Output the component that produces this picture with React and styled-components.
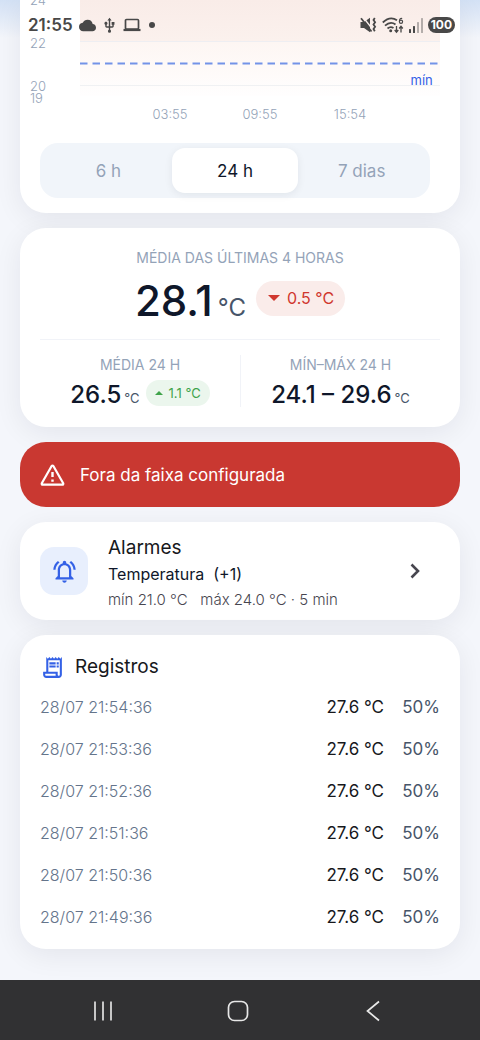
import React, { useState } from 'react';
import styled, { createGlobalStyle } from 'styled-components';
import { MdCloud, MdOutlineNotificationsActive, MdOutlineReceiptLong, MdUsb } from 'react-icons/md';

const ranges = ['6 h', '24 h', '7 dias'];

const yTicks = [
    { label: '24', y: -1 },
    { label: '22', y: 42 },
    { label: '20', y: 85 },
    { label: '19', y: 97 },
];

const xTicks = [
    { label: '03:55', x: '25%' },
    { label: '09:55', x: '50%' },
    { label: '15:54', x: '75%' },
];

const records = [
    { time: '28/07 21:54:36', temp: '27.6 °C', hum: '50%' },
    { time: '28/07 21:53:36', temp: '27.6 °C', hum: '50%' },
    { time: '28/07 21:52:36', temp: '27.6 °C', hum: '50%' },
    { time: '28/07 21:51:36', temp: '27.6 °C', hum: '50%' },
    { time: '28/07 21:50:36', temp: '27.6 °C', hum: '50%' },
    { time: '28/07 21:49:36', temp: '27.6 °C', hum: '50%' },
];

function StatusIcons() {
    return (
        <StatusGroup>
            <svg width='17' height='16' viewBox='0 0 17 16' fill='none' stroke='#484848' strokeWidth='1.6'>
                <path d='M0.5 5h3.5L10 0.8v14.4L4 11H0.5z' fill='#484848' stroke='none' />
                <path d='M3 0l9 11.5' stroke='#fbf0ed' strokeWidth='1.3' />
                <path d='M1 1.2l10.5 13.3' strokeWidth='1.8' />
                <path d='M14.8 1l-1.3 2 1.6 2.2-1.6 2.3 1.6 2.2-1.6 2.3 1.3 2.2' strokeWidth='1.8' />
            </svg>
            <svg width='22' height='17' viewBox='0 0 22 17' fill='none' stroke='#484848' strokeWidth='1.8'>
                <path d='M0.8 5.5Q8 -1.5 15 3.2M3 8.7Q8.5 3.8 13.5 7.5M5.5 11.5Q8.5 9 11.5 11' />
                <circle cx='8.7' cy='13.8' r='1.5' fill='#484848' stroke='none' />
                <path d='M14.5 9v6M12.7 13l1.8 2.2 1.8-2.2M19 15.5V9.5M17.2 11.5L19 9.3l1.8 2.2' strokeWidth='1.3' />
                <path d='M20.2 1.5Q17.5 0.8 17.4 4.5' strokeWidth='1.2' />
                <circle cx='19' cy='4.7' r='1.6' strokeWidth='1.2' />
            </svg>
            <svg width='14' height='15' viewBox='0 0 14 15' fill='#484848'>
                <rect x='0' y='11' width='2' height='4' rx='0.5' />
                <rect x='4' y='8' width='2' height='7' rx='0.5' />
                <rect x='8' y='4' width='2' height='11' rx='0.5' opacity='0.4' />
                <rect x='12' y='0' width='2' height='15' rx='0.5' opacity='0.4' />
            </svg>
            <Battery>100</Battery>
        </StatusGroup>
    );
}

function Chart() {
    return (
        <ChartBox>
            <svg width='50' height='128'>
                {yTicks.map(t => (
                    <AxisText key={t.label} x='0' y={t.y + 6}>{t.label}</AxisText>
                ))}
            </svg>
            <svg width='100%' height='128'>
                <defs>
                    <linearGradient id='band' x1='0' y1='0' x2='0' y2='1'>
                        <stop offset='0' stopColor='#f9ece8' />
                        <stop offset='0.43' stopColor='#fbf1ed' />
                        <stop offset='0.44' stopColor='#fdf6f3' />
                        <stop offset='1' stopColor='#fffefe' />
                    </linearGradient>
                </defs>
                <rect width='100%' height='96' fill='url(#band)' />
                <line x1='0' x2='100%' y1='41.5' y2='41.5' stroke='#eeeef2' />
                <line x1='0' x2='100%' y1='85.5' y2='85.5' stroke='#f0f1f3' />
                <line x1='0' x2='100%' y1='63.5' y2='63.5' stroke='#7393e8' strokeWidth='2' strokeDasharray='7.5 5' />
                <MinText x='98%' y='85' textAnchor='end'>mín</MinText>
                {xTicks.map(t => (
                    <AxisText key={t.label} x={t.x} y='119' textAnchor='middle'>{t.label}</AxisText>
                ))}
            </svg>
        </ChartBox>
    );
}

function App() {
    const [range, setRange] = useState('24 h');

    return (
        <Page>
            <GlobalStyle />
            <StatusBar>
                <StatusGroup>
                    <Clock>21:55</Clock>
                    <MdCloud size={17} />
                    <MdUsb size={17} />
                    <svg width='18' height='14' viewBox='0 0 18 14' fill='none' stroke='#484848' strokeWidth='1.7'>
                        <rect x='2.5' y='1.5' width='13' height='9.5' rx='1' />
                        <path d='M0.5 12h17' strokeWidth='2.2' />
                    </svg>
                    <Dot />
                </StatusGroup>
                <StatusIcons />
            </StatusBar>

            <Main>
                <ChartCard>
                    <Chart />
                    <Segments>
                        {ranges.map(r => (
                            <Segment key={r} type='button' $active={r === range} aria-pressed={r === range} onClick={() => setRange(r)}>
                                {r}
                            </Segment>
                        ))}
                    </Segments>
                </ChartCard>

                <StatsCard>
                    <Label>MÉDIA DAS ÚLTIMAS 4 HORAS</Label>
                    <BigRow>
                        <BigReading>28.1<BigUnit>°C</BigUnit></BigReading>
                        <Chip $tone='down'>
                            <svg width='12' height='6' viewBox='0 0 12 6'><path d='M0 0h12L6 6z' fill='currentColor' /></svg>
                            0.5 °C
                        </Chip>
                    </BigRow>
                    <Columns>
                        <Column>
                            <Label>MÉDIA 24 H</Label>
                            <SmallRow>
                                <Reading>26.5<Unit>°C</Unit></Reading>
                                <Chip $tone='up' $small>
                                    <svg width='8' height='4' viewBox='0 0 8 4'><path d='M0 4h8L4 0z' fill='currentColor' /></svg>
                                    1.1 °C
                                </Chip>
                            </SmallRow>
                        </Column>
                        <Column>
                            <Label>MÍN–MÁX 24 H</Label>
                            <SmallRow>
                                <Reading>24.1 – 29.6<Unit>°C</Unit></Reading>
                            </SmallRow>
                        </Column>
                    </Columns>
                </StatsCard>

                <Alert role='alert'>
                    <svg width='25' height='24' viewBox='0 0 25 24' fill='none' stroke='#fff' strokeWidth='2.2' strokeLinejoin='round'>
                        <path d='M11.5 3.2L1.8 20.2Q1.3 21.6 2.8 21.7H22.2Q23.7 21.6 23.2 20.2L13.5 3.2Q12.5 1.9 11.5 3.2Z' />
                        <path d='M12.5 9v5M12.5 16.5v2.2' strokeWidth='2.4' />
                    </svg>
                    Fora da faixa configurada
                </Alert>

                <AlarmCard type='button'>
                    <IconTile><MdOutlineNotificationsActive size={27} /></IconTile>
                    <AlarmText>
                        <Title>Alarmes</Title>
                        <AlarmName>Temperatura&nbsp; (+1)</AlarmName>
                        <AlarmRange>mín 21.0 °C &nbsp; máx 24.0 °C · 5 min</AlarmRange>
                    </AlarmText>
                    <svg width='10' height='16' viewBox='0 0 10 16' fill='none' stroke='#47464f' strokeWidth='2.6'>
                        <path d='M1.5 1.5L8 8l-6.5 6.5' />
                    </svg>
                </AlarmCard>

                <RecordsCard>
                    <RecordsHead>
                        <MdOutlineReceiptLong size={25} color='#3461e6' />
                        <Title as='h2'>Registros</Title>
                    </RecordsHead>
                    <Table>
                        <tbody>
                            {records.map(r => (
                                <tr key={r.time}>
                                    <Time>{r.time}</Time>
                                    <Temp>{r.temp}</Temp>
                                    <Hum>{r.hum}</Hum>
                                </tr>
                            ))}
                        </tbody>
                    </Table>
                </RecordsCard>
            </Main>

            <NavBar>
                <NavButton type='button' aria-label='Recentes'>
                    <svg width='20' height='20' viewBox='0 0 20 20' stroke='#d8d8d8' strokeWidth='1.8'>
                        <path d='M2 0.5v19M10 0.5v19M18 0.5v19' />
                    </svg>
                </NavButton>
                <NavButton type='button' aria-label='Início'>
                    <svg width='22' height='22' viewBox='0 0 22 22' fill='none' stroke='#e8e8e8' strokeWidth='1.7'>
                        <rect x='1.5' y='1.5' width='19' height='19' rx='6' />
                    </svg>
                </NavButton>
                <NavButton type='button' aria-label='Voltar'>
                    <svg width='14' height='22' viewBox='0 0 14 22' fill='none' stroke='#e8e8e8' strokeWidth='1.7'>
                        <path d='M13 1.5L1.5 11 13 20.5' />
                    </svg>
                </NavButton>
            </NavBar>
        </Page>
    );
}

const GlobalStyle = createGlobalStyle`
    * {
        box-sizing: border-box;
    }
    body {
        margin: 0;
        font-family: Inter, 'Liberation Sans', sans-serif;
        color: #17181c;
    }
    button {
        font: inherit;
        color: inherit;
        border: none;
        cursor: pointer;
    }
    h2, p {
        margin: 0;
    }
    svg {
        display: block;
        flex-shrink: 0;
    }
`;

const Page = styled.div`
    position: relative;
    min-height: 100vh;
    display: flex;
    flex-direction: column;
    background: linear-gradient(#d3e1f5 0, #f4f6fb 38px);
`;

const StatusBar = styled.header`
    position: absolute;
    top: 0;
    left: 0;
    right: 0;
    z-index: 1;
    height: 50px;
    padding: 0 25px 0 28px;
    display: flex;
    align-items: center;
    justify-content: space-between;
    color: #484848;
`;

const StatusGroup = styled.div`
    display: flex;
    align-items: center;
    gap: 5px;
`;

const Clock = styled.span`
    font-size: 17px;
    font-weight: 600;
    margin-right: 1px;
`;

const Dot = styled.span`
    width: 6px;
    height: 6px;
    margin-left: 3px;
    border-radius: 50%;
    background: #484848;
`;

const Battery = styled.span`
    height: 16px;
    padding: 0 3px;
    border-radius: 8px;
    background: #484848;
    color: #fff;
    font-size: 12px;
    line-height: 16px;
    font-weight: 700;
`;

const Main = styled.main`
    flex: 1;
    display: flex;
    flex-direction: column;
    gap: 15px;
    padding: 0 20px 31px;
`;

const Card = styled.section`
    padding: 20px;
    border-radius: 26px;
    background: #fff;
    box-shadow: 0 6px 28px rgba(20, 20, 40, 0.07);
`;

const ChartCard = styled(Card)`
    padding: 0 30px 15px 20px;
    border-radius: 0 0 26px 26px;
`;

const ChartBox = styled.div`
    display: grid;
    grid-template-columns: 50px 1fr;
    margin: 0 -10px 15px;
`;

const AxisText = styled.text`
    font-size: 13px;
    font-weight: 300;
    fill: #94a3b8;
`;

const MinText = styled.text`
    font-size: 13px;
    fill: #3461e6;
`;

const Segments = styled.div`
    display: grid;
    grid-template-columns: repeat(3, 1fr);
    padding: 5px;
    border-radius: 18px;
    background: #f1f5fa;
`;

const Segment = styled.button`
    height: 45px;
    padding: 0;
    border-radius: 13px;
    font-size: 17px;
    font-weight: 400;
    color: ${props => props.$active ? '#0f172a' : '#94a3b8'};
    background: ${props => props.$active ? '#fff' : 'transparent'};
    box-shadow: ${props => props.$active ? '0 2px 8px rgba(15, 23, 42, 0.07)' : 'none'};
`;

const StatsCard = styled(Card)`
    text-align: center;
`;

const Label = styled.p`
    font-size: 14px;
    line-height: 20px;
    color: #94a3b8;
`;

const BigRow = styled.div`
    height: 48px;
    margin: 6px 0 17px;
    display: flex;
    justify-content: center;
    align-items: center;
    gap: 10px;
`;

const SmallRow = styled.div`
    height: 28px;
    margin-top: 4px;
    display: flex;
    justify-content: center;
    align-items: center;
    gap: 6px;
`;

const BigReading = styled.div`
    display: flex;
    align-items: baseline;
    gap: 5px;
    padding-top: 6px;
    font-size: 42px;
    line-height: 48px;
    font-weight: 500;
    color: #0f172a;
    white-space: nowrap;
`;

const Reading = styled(BigReading)`
    gap: 3px;
    padding-top: 4px;
    font-size: 24px;
    line-height: 28px;
`;

const BigUnit = styled.span`
    font-size: 24px;
    line-height: 24px;
    font-weight: 400;
    color: #475569;
`;

const Unit = styled(BigUnit)`
    font-size: 13px;
    line-height: 14px;
`;

const Chip = styled.span`
    display: flex;
    align-items: center;
    gap: ${props => props.$small ? '6px' : '7px'};
    height: ${props => props.$small ? '26px' : '35px'};
    padding: ${props => props.$small ? '0 9px' : '0 11px 0 12px'};
    border-radius: 18px;
    font-size: ${props => props.$small ? '13px' : '16px'};
    white-space: nowrap;
    color: ${props => props.$tone === 'up' ? '#3fa34a' : '#d0382f'};
    background: ${props => props.$tone === 'up' ? '#ebf6ed' : '#faecea'};
`;

const Columns = styled.div`
    display: grid;
    grid-template-columns: 1fr 1fr;
    padding-top: 15px;
    border-top: 1px solid #f1f3f8;
`;

const Column = styled.div`
    & + & {
        border-left: 1px solid #f1f3f8;
    }
`;

const Alert = styled.div`
    display: flex;
    align-items: center;
    gap: 15px;
    min-height: 65px;
    padding: 0 20px;
    border-radius: 26px;
    background: #c93831;
    color: #fff;
    font-size: 17px;
`;

const AlarmCard = styled(Card).attrs({ as: 'button' })`
    display: flex;
    align-items: center;
    gap: 20px;
    padding: 7px 40px 7px 20px;
    text-align: left;
`;

const IconTile = styled.span`
    width: 48px;
    height: 48px;
    border-radius: 14px;
    display: flex;
    align-items: center;
    justify-content: center;
    background: #e8effd;
    color: #3461e6;
`;

const AlarmText = styled.span`
    flex: 1;
    display: flex;
    flex-direction: column;
    padding-top: 6px;
    line-height: 26px;
`;

const Title = styled.span`
    font-size: 19px;
    line-height: 26px;
    font-weight: 400;
    color: #17181c;
`;

const AlarmName = styled.span`
    font-size: 16px;
    color: #0f172a;
`;

const AlarmRange = styled.span`
    font-size: 15px;
    font-weight: 300;
    color: #47464f;
`;

const RecordsCard = styled(Card)`
    padding: 19px 20px 11px;
`;

const RecordsHead = styled.div`
    display: flex;
    align-items: center;
    gap: 10px;
    margin-bottom: 6px;
`;

const Table = styled.table`
    width: 100%;
    border-collapse: collapse;
`;

const Cell = styled.td`
    height: 42px;
    padding: 0;
    font-size: 17px;
    text-align: right;
`;

const Time = styled(Cell)`
    font-size: 16px;
    font-weight: 300;
    text-align: left;
    color: #64748b;
`;

const Temp = styled(Cell)``;

const Hum = styled(Cell)`
    width: 56px;
    color: #475569;
`;

const NavBar = styled.nav`
    display: grid;
    grid-template-columns: repeat(3, 1fr);
    height: 60px;
    padding: 2px 40px 0 36px;
    background: #313133;
`;

const NavButton = styled.button`
    display: flex;
    align-items: center;
    justify-content: center;
    padding: 0;
    background: none;
`;

export default App;
